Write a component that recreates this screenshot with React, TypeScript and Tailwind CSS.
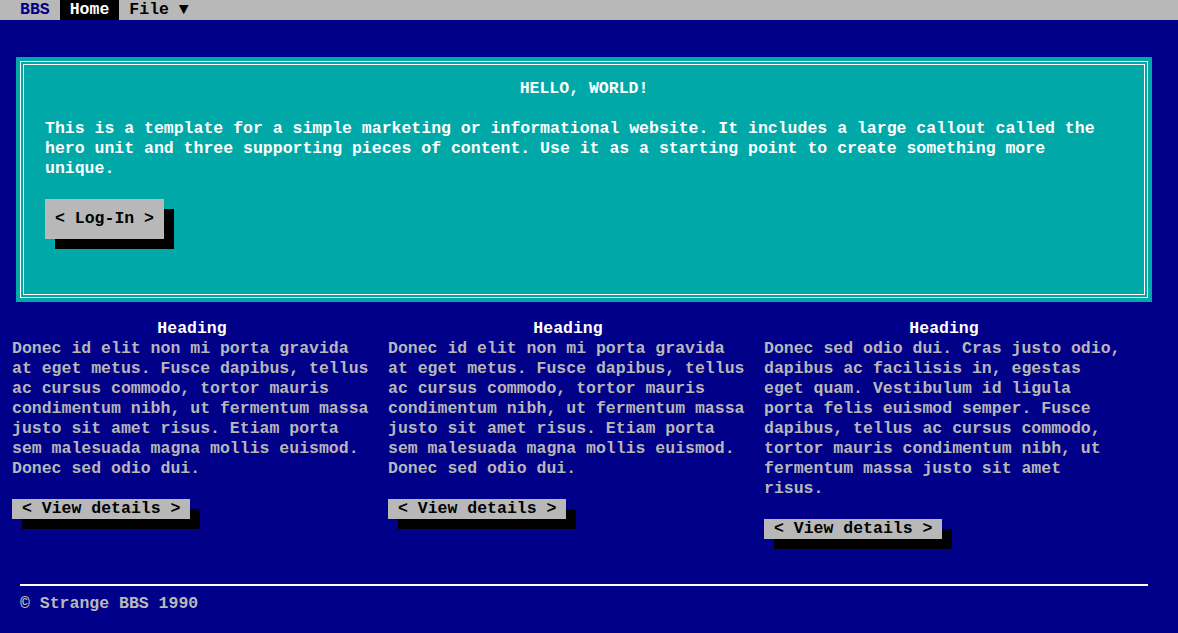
const cols = [
  "Donec id elit non mi porta gravida at eget metus. Fusce dapibus, tellus ac cursus commodo, tortor mauris condimentum nibh, ut fermentum massa justo sit amet risus. Etiam porta sem malesuada magna mollis euismod. Donec sed odio dui.",
  "Donec id elit non mi porta gravida at eget metus. Fusce dapibus, tellus ac cursus commodo, tortor mauris condimentum nibh, ut fermentum massa justo sit amet risus. Etiam porta sem malesuada magna mollis euismod. Donec sed odio dui.",
  "Donec sed odio dui. Cras justo odio, dapibus ac facilisis in, egestas eget quam. Vestibulum id ligula porta felis euismod semper. Fusce dapibus, tellus ac cursus commodo, tortor mauris condimentum nibh, ut fermentum massa justo sit amet risus.",
];

export default function App() {
  return (
    <div className="min-h-[633px] bg-[#000088] font-['Liberation_Mono',monospace] text-[16.5px] leading-[20px] font-bold text-[#b8b8b8]">
      <nav className="flex h-5 bg-[#b8b8b8] pl-[10px] whitespace-pre">
        <span className="px-[10px] text-[#000088]">BBS</span>
        <span className="bg-black px-[10px] text-white">Home</span>
        <span className="px-[10px] text-black">File ▼</span>
      </nav>

      <div className="ml-4 mt-[37px] w-[1136px] bg-[#00a8a8] p-1">
        <div className="border-[4px] border-double border-white pl-[21px] pr-[21px] pt-[14px] pb-[55px] text-white">
          <h1 className="text-center">HELLO, WORLD!</h1>
          <p className="mt-5">
            This is a template for a simple marketing or informational website. It includes a large callout called the hero unit and three supporting pieces of content. Use it as a starting point to create something more unique.
          </p>
          <button className="mt-5 block bg-[#b8b8b8] px-[10px] py-[10px] text-black shadow-[10px_10px_0_#000] whitespace-pre">
            {"< Log-In >"}
          </button>
        </div>
      </div>

      <div className="ml-3 mt-[17px] flex items-start gap-4">
        {cols.map((text, i) => (
          <div key={i} className="w-[360px]">
            <h2 className="text-center text-white">Heading</h2>
            <p>{text}</p>
            <button className="mt-5 block bg-[#b8b8b8] px-[10px] text-black shadow-[10px_10px_0_#000] whitespace-pre">
              {"< View details >"}
            </button>
          </div>
        ))}
      </div>

      <footer className="ml-5 mt-[45px] w-[1128px]">
        <div className="h-[2px] bg-white" />
        <p className="mt-2">© Strange BBS 1990</p>
      </footer>
    </div>
  );
}
